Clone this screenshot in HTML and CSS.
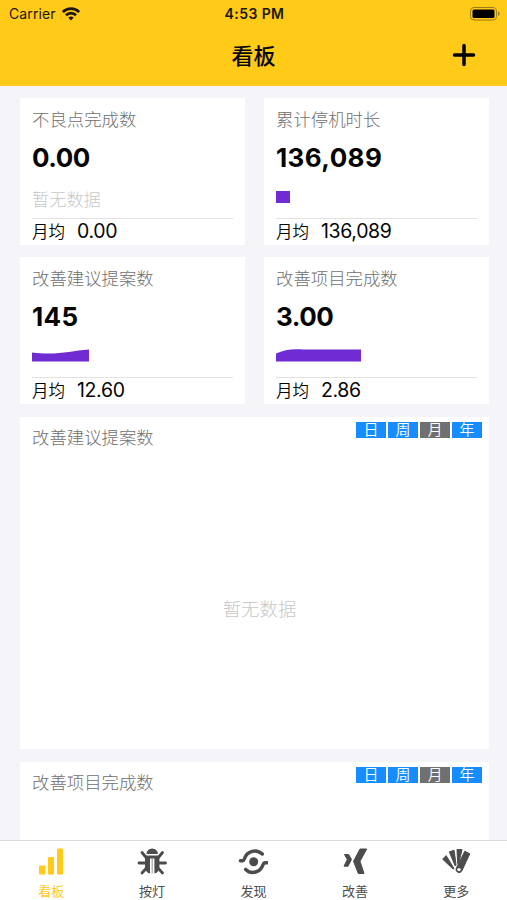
FILE: index.html
```html
<!DOCTYPE html>
<html lang="zh-CN">
<head>
<meta charset="utf-8">
<title>看板</title>
<link rel="stylesheet" href="styles.css">
</head>
<body>
<div class="app">
  <header class="top">
    <div class="status">
      <div class="carrier"><span>Carrier</span>
        <svg width="18" height="14" viewBox="0 0 18 14" fill="none" stroke="#1c1708" stroke-width="2.7"><path d="M.8 5a11.500 11.500 0 0 1 16.400 0M4 8.300a7 7 0 0 1 10 0"/><path d="M9 13.400l-2.600-2.700a3.700 3.700 0 0 1 5.200 0z" fill="#1c1708" stroke="none"/></svg>
      </div>
      <span class="time">4:53 PM</span>
      <svg class="battery" width="30" height="14" viewBox="0 0 30 14"><rect x=".5" y=".5" width="26" height="12.500" rx="3.500" fill="none" stroke="#9b7a18"/><rect x="2.500" y="2.500" width="22" height="8.500" rx="1.500"/><path d="M28 4.500q1.700.6 1.700 2.200T28 9z" fill="#9b7a18"/></svg>
    </div>
    <div class="nav">
      <h1>看板</h1>
      <svg class="plus" width="24" height="24" viewBox="0 0 24 24" stroke="#000" stroke-width="3.500" stroke-linecap="round"><path d="M12 2.500v19M2.500 12h19"/></svg>
    </div>
  </header>
  <main class="content">
    <div class="stats">
      <section class="card"><h2>不良点完成数</h2><strong>0.00</strong><div class="trend empty">暂无数据</div><div class="average"><span>月均</span><b>0.00</b></div></section>
      <section class="card"><h2>累计停机时长</h2><strong class="long">136,089</strong><div class="trend"><svg width="100" height="14" viewBox="0 0 100 14"><path d="M0 1h14v12H0z"/></svg></div><div class="average"><span>月均</span><b>136,089</b></div></section>
      <section class="card"><h2>改善建议提案数</h2><strong class="long">145</strong><div class="trend"><svg width="100" height="14" viewBox="0 0 100 14"><path d="M0 3.500C25 6.500 38 2 57 .5v12H0z"/></svg></div><div class="average"><span>月均</span><b>12.60</b></div></section>
      <section class="card"><h2>改善项目完成数</h2><strong>3.00</strong><div class="trend"><svg width="100" height="14" viewBox="0 0 100 14"><path d="M0 4.500C8 1 16-.5 27 .5h58v12H0z"/></svg></div><div class="average"><span>月均</span><b>2.86</b></div></section>
    </div>
    <section class="panel">
      <div class="panel-head"><h2>改善建议提案数</h2><div class="periods"><span>日</span><span>周</span><span class="selected">月</span><span>年</span></div></div>
      <div class="no-data">暂无数据</div>
    </section>
    <section class="panel">
      <div class="panel-head"><h2>改善项目完成数</h2><div class="periods"><span>日</span><span>周</span><span class="selected">月</span><span>年</span></div></div>
    </section>
  </main>
  <nav class="tabs">
    <div class="tab active"><svg viewBox="0 0 30 30"><rect x="3" y="18.500" width="6.500" height="9" rx="1"/><rect x="12" y="10" width="6" height="17.500" rx="1"/><rect x="21" y="1.500" width="6" height="26" rx="1"/></svg><span>看板</span></div>
    <div class="tab"><svg viewBox="0 0 30 30"><path d="M9.500 7a5.700 5.500 0 0 1 11.400 0zM8 8.500h14.400v11q0 6-5 7V11.500h-4.400v15q-5-1-5-7z"/><path d="M14.600 11.500h1.200v15h-1.200z" opacity=".5"/><path d="M9.500 11L5 5.500M21 11l4.500-5.500M9 16H2M21.500 16h7M9.500 21L5 26M21 21l4.500 5" fill="none" stroke="currentColor" stroke-width="2.800" stroke-linecap="round"/></svg><span>按灯</span></div>
    <div class="tab"><svg viewBox="0 0 30 30"><circle cx="15.700" cy="14.700" r="4.500"/><path d="M2.400 13.700h2.300q1 0 1.600-1.700C8.900 3.700 18.500 1.500 24.300 7M29 15.800h-2.300q-1 0-1.600 1.700C22.500 25.500 13.400 28 7.700 22.400" fill="none" stroke="currentColor" stroke-width="3.500" stroke-linecap="round"/></svg><span>发现</span></div>
    <div class="tab"><svg viewBox="0 0 30 30" stroke="currentColor" stroke-linejoin="round"><path d="M4.500 7.500h4.200l2.800 5L8 19.200H4l3.300-6.700zM20 2h6.700L20 14.300l4 12.200h-5.700L13.500 14.300z"/></svg><span>改善</span></div>
    <div class="tab"><svg viewBox="0 0 30 30" stroke="currentColor" stroke-linejoin="round"><path d="M1.700 12.200l3.400-3.600 7.900 12.900-1 .5zM8.300 4.800l4.800-1.500 2 15-1 .5zM16 2.500h5l-3.300 14-1 .1z"/><path d="M23.800 4.200l5 2.600-8 17.200a3.100 3.100 0 0 1-5.600-2.600z"/><circle cx="18" cy="22.600" r="1.700" fill="#fff" stroke="none"/></svg><span>更多</span></div>
  </nav>
</div>
</body>
</html>
```
FILE: styles.css
```css
* { box-sizing: border-box; }
body { margin: 0; font-family: Inter, "Noto Sans CJK SC", sans-serif; background: #f4f4f9; color: #050505; }
h1, h2 { margin: 0; }
svg { display: block; }
.app { height: 900px; display: flex; flex-direction: column; overflow: hidden; }
.top { height: 86px; flex: none; background: #ffca18; }
.status { height: 27px; display: grid; grid-template-columns: 1fr auto 1fr; align-items: center; padding: 0 7px 0 9px; font-size: 14px; color: #1c1708; }
.carrier { display: flex; align-items: center; gap: 6px; letter-spacing: .1px; }
.time { font-size: 14px; font-weight: 600; letter-spacing: .4px; }
.battery { justify-self: end; }
.nav { height: 57px; display: grid; grid-template-columns: 1fr auto 1fr; align-items: center; padding: 0 31px; }
.nav h1 { grid-column: 2; font-size: 22px; line-height: 30px; font-weight: 500; }
.plus { justify-self: end; margin-top: -2px; }
.content { flex: 1; min-height: 0; overflow: hidden; padding: 12px 18px 0 20px; }
.stats { display: grid; grid-template-columns: 225px 225px; column-gap: 19px; row-gap: 12px; }
.card { height: 147px; padding: 9px 12px 0; background: #fff; }
h2 { font-size: 17.4px; line-height: 26px; font-weight: 300; color: #707070; }
.card strong { display: block; margin-top: 7px; font-size: 26px; line-height: 36px; font-weight: 700; letter-spacing: -.5px; }
.card .long { letter-spacing: .4px; }
.trend { height: 43px; padding-top: 14px; border-bottom: 1px solid #e2e2e2; }
.trend path { fill: #702bd2; }
.trend.empty { padding-top: 11px; font-size: 17.2px; line-height: 26px; font-weight: 300; color: #c8c8c8; }
.average { display: flex; gap: 12px; height: 24px; align-items: center; font-size: 16.5px; }
.average span { font-weight: 350; }
.average b { font-size: 19.500px; font-weight: 400; letter-spacing: -.35px; }
.panel { width: 469px; height: 332px; margin-top: 13px; background: #fff; display: flex; flex-direction: column; }
.panel-head { display: flex; justify-content: space-between; padding: 5px 7px 0 12px; height: 40px; }
.panel-head h2 { padding-top: 3px; }
.periods { display: flex; gap: 2px; height: 16px; }
.periods span { width: 30px; background: #178cff; color: #fff; font-size: 15px; line-height: 16px; text-align: center; font-weight: 350; }
.periods .selected { background: #707070; }
.no-data { margin: auto; padding-top: 9px; width: 100%; padding-left: 10px; text-align: center; font-size: 18.4px; font-weight: 300; color: #c8c8c8; }
.tabs { flex: none; height: 60px; border-top: 1px solid #dcdce0; background: #fff; display: grid; grid-template-columns: repeat(5, 1fr); }
.tab { display: flex; flex-direction: column; align-items: center; color: #4c4c4c; font-size: 13px; line-height: 18px; padding-top: 6px; }
.tab svg { width: 30px; height: 30px; fill: currentColor; }
.tab span { margin-top: 5px; }
.tab.active { color: #ffca18; padding-left: 1px; }
```
